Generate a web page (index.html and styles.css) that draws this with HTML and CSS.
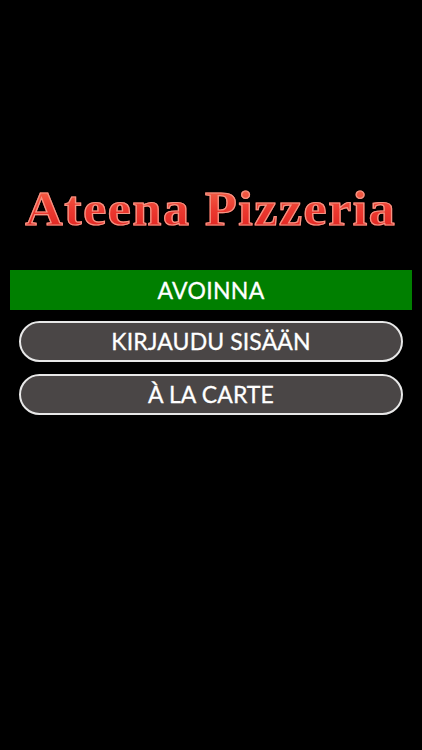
FILE: index.html
```html
<!DOCTYPE html>
<html lang="fi">
<head>
    <meta charset="UTF-8">
    <meta name="viewport" content="width=device-width, initial-scale=1.0">
    <title>Ateena Pizzeria</title>
    <link rel="stylesheet" href="styles.css">
</head>
<body>
    <div class="screen">
        <h1 class="logo"><span class="logo-text">Ateena Pizzeria</span></h1>

        <div class="status">AVOINNA</div>

        <div class="menu">
            <a class="menu-btn" href="#">KIRJAUDU SISÄÄN</a>
            <a class="menu-btn" href="#">À LA CARTE</a>
        </div>
    </div>
</body>
</html>
```

FILE: styles.css
```css
html, body {
    margin: 0;
    padding: 0;
    background: #000;
}

.screen {
    width: 422px;
    height: 750px;
    background: #000;
    font-family: "Lato", "Open Sans", sans-serif;
    color: #fff;
}

.logo {
    margin: 0;
    padding-top: 181px;
    height: 270px;
    box-sizing: border-box;
    text-align: center;
    font-family: "Liberation Serif", "Times New Roman", serif;
    font-weight: bold;
    font-size: 48px;
    line-height: 56px;
}

.logo-text {
    display: inline-block;
    letter-spacing: 1.5px;
    transform: scaleX(1.08);
    background: linear-gradient(#f87050, #ec3a30 50%, #dc1c1c);
    -webkit-background-clip: text;
    background-clip: text;
    color: transparent;
    -webkit-text-stroke: 1.2px #f29484;
}

.status {
    margin: 0 10px;
    height: 40px;
    background: #007f00;
    text-align: center;
    font-size: 23px;
    line-height: 40px;
    letter-spacing: 0.3px;
    -webkit-text-stroke: 0.3px #fff;
}

.menu {
    display: flex;
    flex-direction: column;
    gap: 12px;
    margin: 11px 19px 0;
}

.menu-btn {
    display: block;
    height: 41px;
    box-sizing: border-box;
    border: 2px solid #e8e8e8;
    border-radius: 21px;
    background: #4a4646;
    color: #fff;
    text-decoration: none;
    text-align: center;
    font-size: 23px;
    line-height: 37px;
    letter-spacing: 0.1px;
    -webkit-text-stroke: 0.3px #fff;
}
```
